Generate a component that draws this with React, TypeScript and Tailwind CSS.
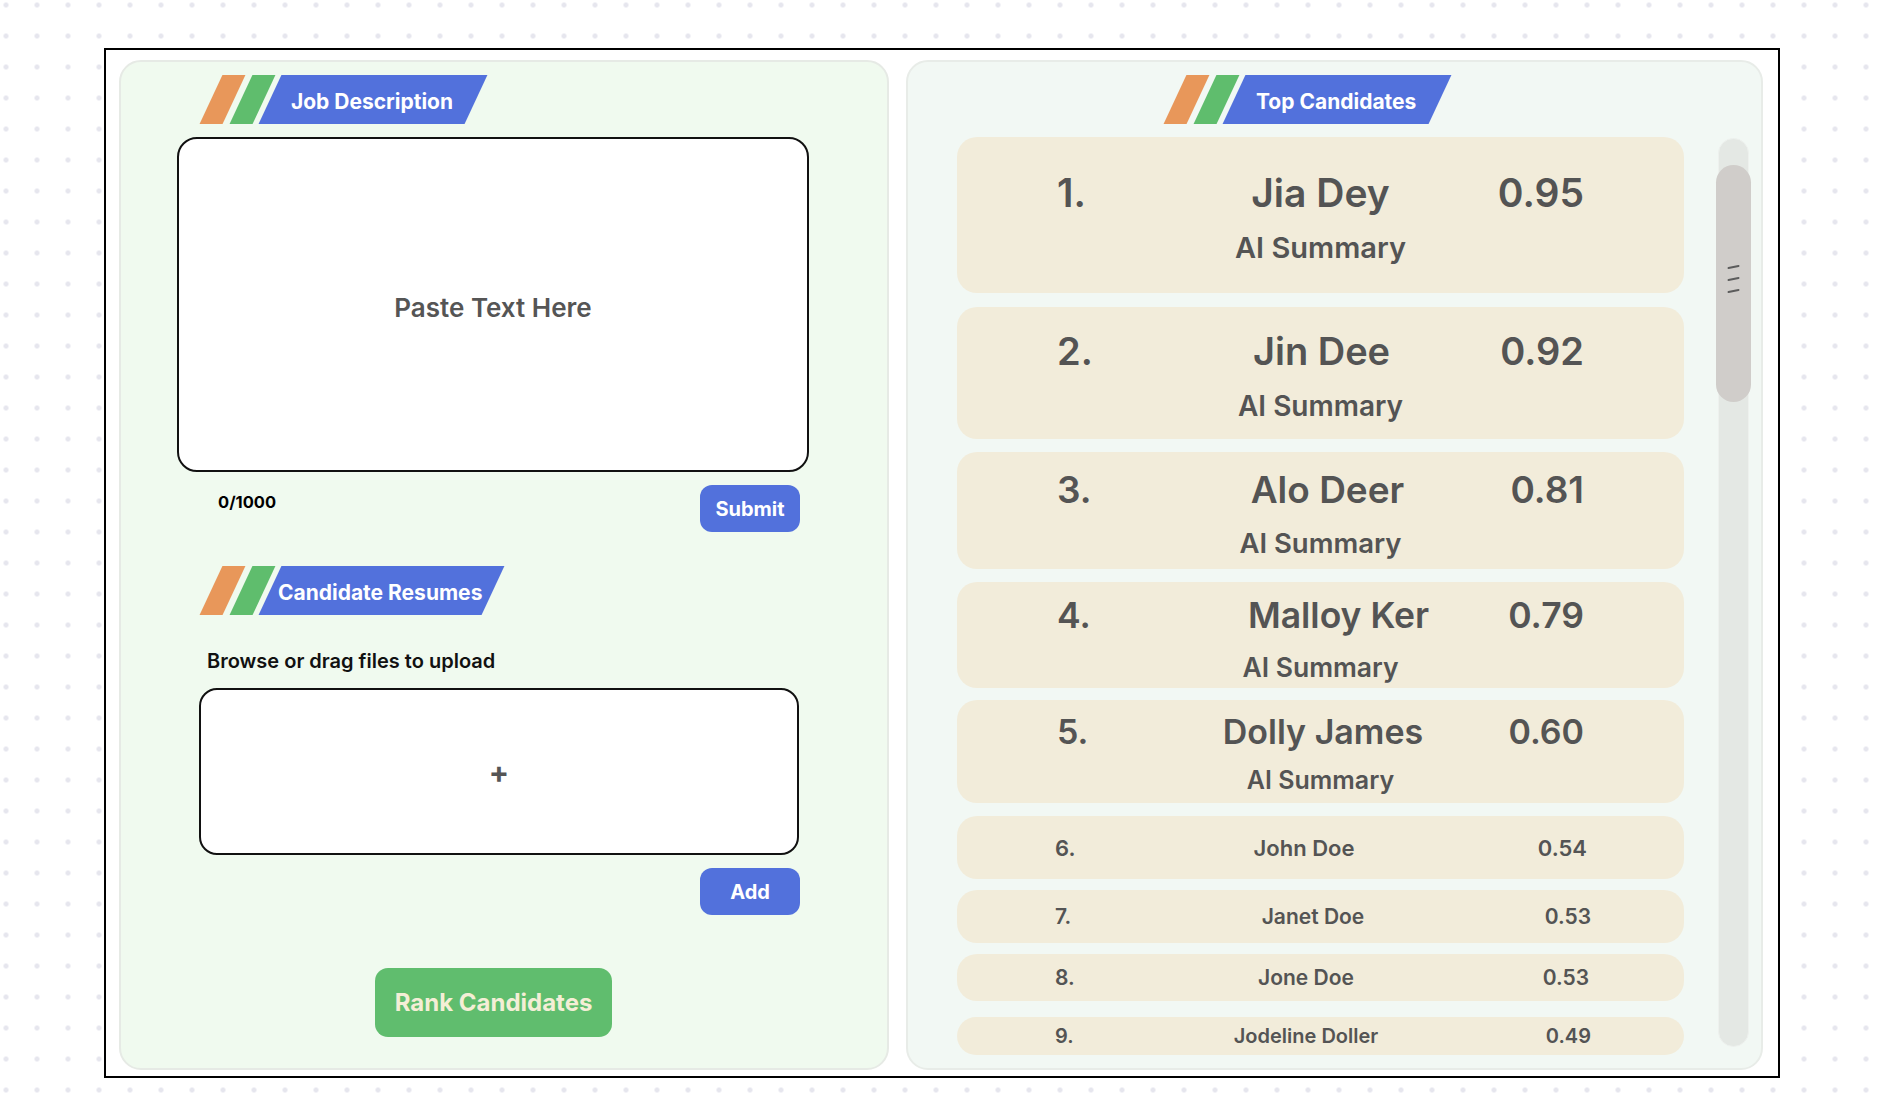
import type { ReactNode } from 'react'

type TopCandidate = {
  rank: string
  name: string
  score: string
  box: string
  pad: string
  nameText: string
  nameShift: string
  sumText: string
}

type OtherCandidate = {
  rank: string
  name: string
  score: string
  box: string
  text: string
  nameShift: string
  scoreShift: string
}

const topCandidates: TopCandidate[] = [
  { rank: '1.', name: 'Jia Dey', score: '0.95', box: 'h-[156px]', pad: 'pt-[36px]', nameText: 'text-[39px]', nameShift: '', sumText: 'mt-[21px] text-[29px]' },
  { rank: '2.', name: 'Jin Dee', score: '0.92', box: 'mt-[14px] h-[132px]', pad: 'pt-[25px]', nameText: 'text-[38px]', nameShift: 'pl-[2px]', sumText: 'mt-[22px] text-[28px]' },
  { rank: '3.', name: 'Alo Deer', score: '0.81', box: 'mt-[13px] h-[117px]', pad: 'pt-[19px]', nameText: 'text-[37px]', nameShift: 'pl-[14px]', sumText: 'mt-[22px] text-[27.5px]' },
  { rank: '4.', name: 'Malloy Ker', score: '0.79', box: 'mt-[13px] h-[106px]', pad: 'pt-[16px]', nameText: 'text-[35.5px]', nameShift: 'pl-[36px]', sumText: 'mt-[20px] text-[26.5px]' },
  { rank: '5.', name: 'Dolly James', score: '0.60', box: 'mt-[12px] h-[103px]', pad: 'pt-[15px]', nameText: 'text-[34px]', nameShift: 'pl-[5px]', sumText: 'mt-[19px] text-[25px]' },
]

const otherCandidates: OtherCandidate[] = [
  { rank: '6.', name: 'John Doe', score: '0.54', box: 'mt-[13px] h-[63px]', text: 'text-[22px]', nameShift: '', scoreShift: '' },
  { rank: '7.', name: 'Janet Doe', score: '0.53', box: 'mt-[11px] h-[53px]', text: 'text-[21px]', nameShift: 'pl-[14px]', scoreShift: '-mr-[4px]' },
  { rank: '8.', name: 'Jone Doe', score: '0.53', box: 'mt-[11px] h-[47px]', text: 'text-[21px]', nameShift: 'pl-[2px]', scoreShift: '-mr-[2px]' },
  { rank: '9.', name: 'Jodeline Doller', score: '0.49', box: 'mt-[16px] h-[38px]', text: 'text-[20px]', nameShift: '', scoreShift: '-mr-[4px]' },
]

function SectionTag({ label, width }: { label: string; width: string }) {
  return (
    <div className="flex h-[49px]">
      <div className="w-[23px] -skew-x-[25deg] bg-[#e8975a]" />
      <div className="ml-[7px] w-[23px] -skew-x-[25deg] bg-[#5fbd6d]" />
      <div className={`ml-[6px] flex items-center justify-center -skew-x-[25deg] bg-[#5271dc] pt-[4px] ${width}`}>
        <span className="skew-x-[25deg] text-[21px] font-bold text-white">{label}</span>
      </div>
    </div>
  )
}

function BlueButton({ children }: { children: ReactNode }) {
  return (
    <button className="flex h-[47px] w-[100px] items-center justify-center rounded-[12px] bg-[#5271dc] text-[20px] font-bold text-white">
      {children}
    </button>
  )
}

function TopCard({ c }: { c: TopCandidate }) {
  return (
    <div className={`flex shrink-0 flex-col rounded-[20px] bg-[#f2ecda] font-semibold text-[#545454] ${c.box} ${c.pad}`}>
      <div className={`grid grid-cols-[1fr_auto_1fr] items-baseline px-[100px] leading-none ${c.nameText}`}>
        <span className="justify-self-start">{c.rank}</span>
        <span className={c.nameShift}>{c.name}</span>
        <span className="justify-self-end">{c.score}</span>
      </div>
      <div className={`text-center leading-none ${c.sumText}`}>AI Summary</div>
    </div>
  )
}

function RowCard({ c }: { c: OtherCandidate }) {
  return (
    <div className={`flex shrink-0 items-center rounded-[20px] bg-[#f2ecda] pl-[98px] pr-[97px] font-semibold leading-none text-[#545454] ${c.box} ${c.text}`}>
      <span className="w-[60px]">{c.rank}</span>
      <span className={`flex-1 text-center ${c.nameShift}`}>{c.name}</span>
      <span className={`w-[94px] text-right ${c.scoreShift}`}>{c.score}</span>
    </div>
  )
}

function Scrollbar() {
  return (
    <div className="ml-[34px] mt-px h-[909px] w-[31px] rounded-full border border-[#eef1ee] bg-[#e4e8e4]">
      <div className="-ml-[3px] mt-[26px] flex h-[237px] w-[35px] items-center justify-center rounded-full bg-[#d0cdca] pb-[9px]">
        <svg width="13" height="30" viewBox="0 0 13 30">
          <g stroke="#5c5c5c" strokeWidth="2" strokeLinecap="round">
            <line x1="1.5" y1="4" x2="11.5" y2="2" />
            <line x1="1.5" y1="16" x2="11.5" y2="14" />
            <line x1="1.5" y1="28" x2="11.5" y2="26" />
          </g>
        </svg>
      </div>
    </div>
  )
}

export default function App() {
  return (
    <div className="h-[1113px] w-full overflow-hidden bg-white bg-[radial-gradient(circle,#e6e6ee_2.2px,transparent_2.8px)] bg-[size:31px_31px] bg-[position:-9.5px_-10.5px] pt-[48px] font-['Inter',sans-serif]">
      <div className="ml-[104px] flex h-[1030px] w-[1676px] gap-[17px] border-2 border-black bg-white pl-[13px] pt-[10px]">
        {/* left: job description + resumes */}
        <section className="flex h-[1010px] w-[770px] flex-col rounded-[22px] border-2 border-[#e6eae5] bg-[#f0faef]">
          <div className="ml-[90px] mt-[13px]">
            <SectionTag label="Job Description" width="w-[206px]" />
          </div>
          <div className="ml-[56px] mt-[13px] flex h-[335px] w-[632px] items-center justify-center rounded-[20px] border-2 border-[#111] bg-white pt-[6px]">
            <span className="text-[26px] font-semibold text-[#555]">Paste Text Here</span>
          </div>
          <div className="mt-[13px] flex w-[679px] items-start">
            <span className="ml-[97px] mt-[7px] text-[16.5px] font-bold leading-[20px] text-black">0/1000</span>
            <div className="ml-auto">
              <BlueButton>Submit</BlueButton>
            </div>
          </div>

          <div className="ml-[90px] mt-[34px]">
            <SectionTag label="Candidate Resumes" width="w-[223px]" />
          </div>
          <p className="ml-[86px] mt-[34px] text-[20px] font-semibold leading-[24px] text-[#111]">
            Browse or drag files to upload
          </p>
          <div className="ml-[78px] mt-[15px] flex h-[167px] w-[600px] items-center justify-center rounded-[18px] border-2 border-[#111] bg-white">
            <span className="text-[30px] font-bold leading-none text-[#555]">+</span>
          </div>
          <div className="ml-[579px] mt-[13px]">
            <BlueButton>Add</BlueButton>
          </div>

          <button className="ml-[254px] mt-[53px] flex h-[69px] w-[237px] items-center justify-center rounded-[13px] bg-[#60bd6e] text-[24px] font-bold text-[#f4eed6]">
            Rank Candidates
          </button>
        </section>

        {/* right: ranking */}
        <section className="flex h-[1010px] w-[857px] flex-col rounded-[22px] border-2 border-[#e8ece8] bg-[#f2f8f4]">
          <div className="ml-[267px] mt-[13px]">
            <SectionTag label="Top Candidates" width="w-[206px]" />
          </div>
          <div className="mt-[13px] flex">
            <div className="ml-[49px] flex h-[931px] w-[727px] flex-col overflow-hidden">
              {topCandidates.map((c) => (
                <TopCard key={c.rank} c={c} />
              ))}
              {otherCandidates.map((c) => (
                <RowCard key={c.rank} c={c} />
              ))}
            </div>
            <Scrollbar />
          </div>
        </section>
      </div>
    </div>
  )
}
